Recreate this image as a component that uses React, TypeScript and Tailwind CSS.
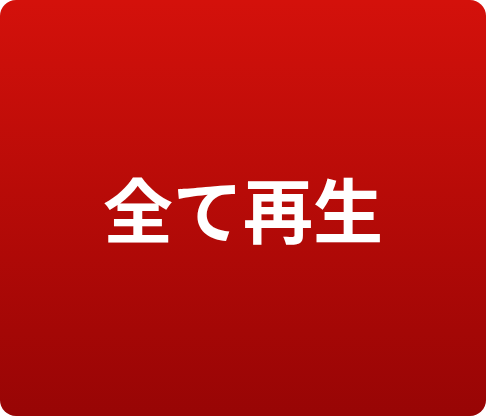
export default function App() {
  return (
    <div className="flex h-[416px] w-[486px] items-center justify-center rounded-2xl bg-gradient-to-b from-[#d4110b] to-[#980505]">
      <span className="text-[70px] font-bold leading-none text-white [font-family:'Noto_Sans_CJK_JP',sans-serif]">
        全て再生
      </span>
    </div>
  );
}
